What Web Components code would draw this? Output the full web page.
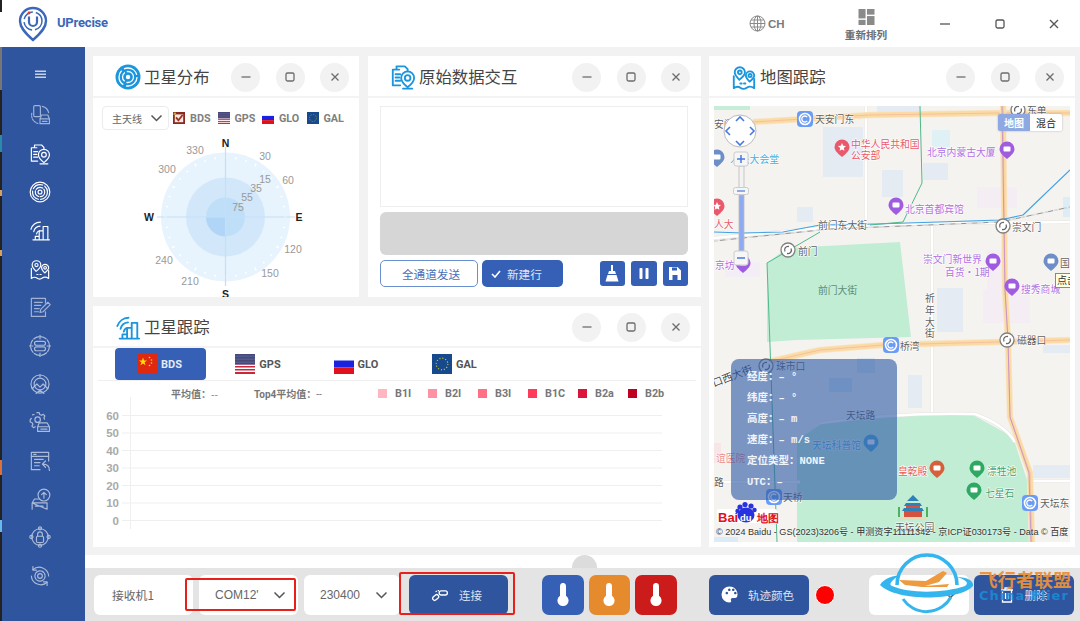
<!DOCTYPE html>
<html lang="zh">
<head>
<meta charset="utf-8">
<title>UPrecise</title>
<style>
  html, body { margin: 0; width: 1080px; height: 621px; overflow: hidden; background: #f2f2f2; }
  body { font-family: "Noto Sans CJK SC", "Liberation Sans", sans-serif; }
</style>
</head>
<body>
<app-shell></app-shell>

<script>
const CJK = `"Noto Sans CJK SC", sans-serif`;
const LATIN = `"Liberation Sans", "Noto Sans CJK SC", sans-serif`;

// line icons, all on a 28 unit box
const ICONS = {
  phonecar: `<rect x="6" y="2" width="8.5" height="14" rx="1.5"/><path d="M17 3a11 11 0 0 1 8 8"/><path d="M3.5 12a11 11 0 0 0 9 13" stroke-dasharray="2 1.6"/><path d="M14 25v-6l2-5h8l2 5v6zM14 19h12M17 22h6"/>`,
  docpin: `<path d="M7 6V2.5h9l3 3V8M10 6H3v17h8"/><path d="M6 11h5M6 14.5h4M6 18h5"/><path d="M19 25c-5-4-7-7-7-10a7 7 0 0 1 14 0c0 3-2 6-7 10z"/><circle cx="19" cy="15" r="3"/><path d="M14 26.5h10"/>`,
  radar: `<circle cx="14" cy="14" r="12.5"/><circle cx="14" cy="14" r="9.5" stroke-dasharray="14 3"/><circle cx="14" cy="14" r="6" stroke-dasharray="9 2"/><circle cx="14" cy="14" r="2.5"/>`,
  signal: `<path d="M2.5 13a13 13 0 0 1 12-9M6 16a9 9 0 0 1 8-7M9.5 19a5 5 0 0 1 4-4"/><path d="M8 26v-4h5v4M13 26V15h5v11M18 26V9.5h6V26M5 26.5h21"/>`,
  mappins: `<path d="M9 17c-3-3-5-5-5-8a5.5 5.5 0 0 1 11 0c0 3-2 5-6 8z"/><circle cx="9.5" cy="9" r="2"/><path d="M20 19c-3-3-4-4-4-6.5a4.5 4.5 0 0 1 9 0c0 2.5-1 3.5-5 6.5z"/><circle cx="20.5" cy="12.5" r="1.7"/><path d="M3 13v13c3-2 5-2 7-.5s5 1.5 7 0 5-1.5 8 .5V16"/><path d="M10 21h1.5M14 21h1.5"/>`,
  formedit: `<path d="M21 9V3H3v23h18v-6"/><path d="M7 8h10M7 12h8M7 16h6M7 20h5"/><path d="M14 21l1-4 9-9 3 3-9 9z"/>`,
  target: `<circle cx="14" cy="14" r="12" stroke-dasharray="7.5 2"/><path d="M14 0v5M14 23v5M0 14h5M23 14h5"/><rect x="7" y="8" width="14" height="5" rx="2.5"/><rect x="7" y="15" width="14" height="5" rx="2.5"/>`,
  dome: `<circle cx="14" cy="14" r="11.5"/><circle cx="14" cy="14" r="7.5"/><path d="M4 20l6-6 4 4 4-4 6 6M14 2v3M9 26l5-4 5 4"/>`,
  gearbox: `<path d="M10 2h3l.7 2.5 2.3 1 2.2-1.3 2 2-1.2 2.3.8 2"/><path d="M4.500 5 6.500 4.500M3 9.500 1.500 11v3L4 15l1 2-1.300 2.200 2 2 2.200-1.200"/><circle cx="11" cy="11" r="3.5"/><path d="M11 26v-6l2-5h10l3 5v6zM11 20h15M15 23h8"/>`,
  winreply: `<path d="M25 14V3H3v22h11"/><path d="M3 8h22M6 5.5h3"/><path d="M7 12h11M7 16h7M7 20h6"/><path d="M26 26c0-5-3-8-8-8M21 14l-4 4 4 4"/>`,
  boxup: `<circle cx="19" cy="9" r="7.5"/><path d="M19 13V6M16 8.5 19 5.5 22 8.5"/><path d="M4 27v-8l3-5h6M4 19h19v8zM8 23h10"/>`,
  lock: `<circle cx="14" cy="14" r="10.5"/><circle cx="14" cy="3" r="2"/><circle cx="14" cy="25" r="2"/><circle cx="3" cy="14" r="2"/><circle cx="25" cy="14" r="2"/><rect x="9.5" y="13" width="9" height="8" rx="1.5"/><path d="M11 13v-2.5a3 3 0 0 1 6 0V13"/>`,
  gearsync: `<path d="M5 6a12 12 0 0 1 20 8M23 22a12 12 0 0 1-20-8"/><path d="M5 2v4.500h4.500M23 26v-4.500h-4.500"/><circle cx="14" cy="14" r="6.5" stroke-dasharray="3 1"/><circle cx="14" cy="14" r="3"/>`
};

function lineIcon(name, size, color, weight) {
  return `<svg width="${size}" height="${size}" viewBox="0 0 28 28" fill="none" stroke="${color}" stroke-width="${weight || 1.6}" stroke-linecap="round" stroke-linejoin="round">${ICONS[name]}</svg>`;
}

function flag(kind, size, radius) {
  const art = {
    cn: `<rect width="20" height="20" fill="#de2910"/><polygon points="6,3.5 7,6.5 10,6.5 7.6,8.3 8.5,11.2 6,9.4 3.5,11.2 4.4,8.3 2,6.5 5,6.5" fill="#ffde00"/><g fill="#ffde00"><circle cx="12.5" cy="3.5" r=".8"/><circle cx="14.5" cy="6" r=".8"/><circle cx="14.5" cy="9" r=".8"/><circle cx="12.5" cy="11.5" r=".8"/></g>`,
    cncheck: `<rect width="20" height="20" fill="#8a2a1e"/><rect x="3" y="4" width="14" height="13" fill="#f3e8e3"/><path d="M5 9l4 5 7-9" fill="none" stroke="#a3301f" stroke-width="3"/><rect x="1" y="1" width="4" height="4" fill="#c2a23a"/>`,
    us: `<rect width="20" height="20" fill="#fff"/><g fill="#c8283e"><rect y="0" width="20" height="1.5"/><rect y="3" width="20" height="1.5"/><rect y="6" width="20" height="1.5"/><rect y="9" width="20" height="1.5"/><rect y="12" width="20" height="1.5"/><rect y="15" width="20" height="1.5"/><rect y="18" width="20" height="2"/></g><rect width="20" height="10.5" fill="#3c4a80" opacity=".9"/>`,
    ru: `<rect width="20" height="20" fill="#fff"/><rect y="6.5" width="20" height="7" fill="#1a22e0"/><rect y="13.5" width="20" height="6.5" fill="#e0101c"/>`,
    eu: `<rect width="20" height="20" fill="#164a8c"/><circle cx="10" cy="10" r="5.8" fill="none" stroke="#d8c83a" stroke-width="1.2" stroke-dasharray="1 2"/>`
  }[kind];
  return `<svg width="${size}" height="${size}" viewBox="0 0 20 20" style="display:block;flex:none;border-radius:${radius || 0}px">${art}</svg>`;
}

class AppShell extends HTMLElement {
  constructor() {
    super();
    this.attachShadow({ mode: "open" }).innerHTML = `
      <style>
        :host { display: flex; width: 1080px; height: 621px; overflow: hidden; }
        .edge { width: 2px; flex: none; background: linear-gradient(#222 0 12px, #fff 12px 47px, #777 47px 90px, #222 90px 135px, #2b8aa8 135px 152px, #222 152px 190px, #d9a05a 190px 196px, #222 196px 250px, #d9a05a 250px 256px, #222 256px 460px, #d9733a 460px 475px, #222 475px 520px, #6bb8ea 520px 532px, #222 532px); }
        .col { flex: 1; display: flex; flex-direction: column; min-width: 0; }
        .row { flex: 1; display: flex; min-height: 0; }
        .main { flex: 1; display: flex; flex-direction: column; min-width: 0; }
        .work { height: 508px; box-sizing: border-box; padding: 9px 5px 8px 8px; background: #f2f2f2; display: flex; gap: 8px; }
        .left { width: 608px; display: flex; flex-direction: column; gap: 9px; }
        .top { display: flex; gap: 9px; }
        sat-panel.a { width: 266px; height: 241px; --head-right: 10px; }
        sat-panel.b { width: 333px; height: 241px; }
        sat-panel.c { height: 241px; }
        sat-panel.d { width: 366px; height: 491px; }
        .gap { height: 13px; background: #fff; position: relative; }
        .handle { position: absolute; left: 487px; top: 0; width: 25px; height: 13px; background: #dcdcdc; border-radius: 13px 13px 0 0; }
      </style>
      <div class="edge"></div>
      <div class="col">
        <top-bar></top-bar>
        <div class="row">
          <side-nav></side-nav>
          <div class="main">
            <div class="work">
              <div class="left">
                <div class="top">
                  <sat-panel class="a" heading="卫星分布" icon="radar"><sky-plot></sky-plot></sat-panel>
                  <sat-panel class="b" heading="原始数据交互" icon="docpin"><raw-data></raw-data></sat-panel>
                </div>
                <sat-panel class="c" heading="卫星跟踪" icon="signal"><track-chart></track-chart></sat-panel>
              </div>
              <sat-panel class="d" heading="地图跟踪" icon="mappins"><map-view></map-view></sat-panel>
            </div>
            <div class="gap"><div class="handle"></div></div>
            <bottom-bar></bottom-bar>
          </div>
        </div>
      </div>
    `;
  }
}

class TopBar extends HTMLElement {
  constructor() {
    super();
    this.attachShadow({ mode: "open" }).innerHTML = `
      <style>
        :host { display: flex; align-items: center; height: 47px; background: #fff; flex: none; position: relative; font-family: ${CJK}; }
        .logo { margin-left: 16px; display: block; flex: none; }
        .name { margin-left: 9px; margin-top: -2px; font: 700 13px Roboto, ${LATIN}; color: #3b68b8; letter-spacing: -.2px; }
        .space { flex: 1; }
        .lang { display: flex; align-items: center; gap: 2px; width: 38px; font: 700 11.5px ${LATIN}; color: #7a7a7a; }
        .sort { width: 44px; margin-left: 57px; display: flex; flex-direction: column; align-items: center; gap: 4px; font-size: 10.6px; font-weight: 700; color: #6e6e6e; line-height: 12px; white-space: nowrap; padding-top: 2px; }
        .ctl { width: 20px; display: flex; justify-content: center; }
        .c1 { margin-left: 47px; } .c2 { margin-left: 35px; } .c3 { margin-left: 34px; margin-right: 16px; }
      </style>
      <svg class="logo" width="30" height="36" viewBox="0 0 30 36" fill="none">
        <path d="M15 34C6 26 2 21 2 15a13 13 0 0 1 26 0c0 6-4 11-13 19z" stroke="#3b68b8" stroke-width="2.4"/>
        <circle cx="15" cy="15" r="9" stroke="#3b68b8" stroke-width="1.5" stroke-dasharray="12 3"/>
        <path d="M11 10.5v5.5a4 4 0 0 0 8 0v-5.5" stroke="#3b68b8" stroke-width="2.2"/>
        <circle cx="11" cy="7" r="1.4" fill="#e8382c"/>
      </svg>
      <div class="name">UPrecise</div>
      <div class="space"></div>
      <div class="lang">
        <svg width="17" height="17" viewBox="0 0 17 17" fill="none" stroke="#8a8a8a" stroke-width="1"><circle cx="8.5" cy="8.5" r="7.5"/><ellipse cx="8.5" cy="8.5" rx="3.5" ry="7.5"/><path d="M1 8.5h15M2 5h13M2 12h13M8.5 1v15"/></svg>
        <span>CH</span>
      </div>
      <div class="sort">
        <svg width="17" height="16" viewBox="0 0 17 17" fill="#8a8a8a" style="display:block"><rect width="7.5" height="10"/><rect x="9" width="8" height="6"/><rect y="11.5" width="7.5" height="5.5"/><rect x="9" y="7.5" width="8" height="9.5"/></svg>
        <span>重新排列</span>
      </div>
      <div class="ctl c1"><svg width="12" height="12" viewBox="0 0 12 12"><path d="M1 6h10" stroke="#555" stroke-width="1.3"/></svg></div>
      <div class="ctl c2"><svg width="12" height="12" viewBox="0 0 12 12"><rect x="2" y="2" width="8" height="8" rx="1.5" fill="none" stroke="#555" stroke-width="1.3"/></svg></div>
      <div class="ctl c3"><svg width="12" height="12" viewBox="0 0 12 12"><path d="M2 2l8 8M10 2l-8 8" stroke="#555" stroke-width="1.3"/></svg></div>
    `;
  }
}

class SideNav extends HTMLElement {
  constructor() {
    super();
    const items = [
      ["phonecar", .55], ["docpin", 1], ["radar", 1], ["signal", 1], ["mappins", 1], ["formedit", .55],
      ["target", .6], ["dome", .6], ["gearbox", .6], ["winreply", .6], ["boxup", .6], ["lock", .6], ["gearsync", .6]
    ];
    const rows = items.map(([name, alpha]) => `<div class="it" style="opacity:${alpha}">${lineIcon(name, 22, "#fff", 1.5)}</div>`).join("");
    this.attachShadow({ mode: "open" }).innerHTML = `
      <style>
        :host { display: block; width: 83px; flex: none; background: #2f559f; }
        .menu { height: 18px; margin-top: 18px; margin-bottom: 13px; display: flex; justify-content: center; align-items: center; padding-right: 7px; }
        .it { height: 38.4px; display: flex; justify-content: center; align-items: center; padding-right: 7px; }
      </style>
      <div class="menu"><svg width="11" height="9" viewBox="0 0 11 9" fill="#c5d1e8"><rect y=".5" width="11" height="1.5"/><rect y="3.5" width="11" height="1.5"/><rect y="6.5" width="11" height="1.5"/></svg></div>
      ${rows}
    `;
  }
}

class SatPanel extends HTMLElement {
  constructor() {
    super();
    const btn = glyph => `<span class="btn"><svg width="12" height="12" viewBox="0 0 12 12" fill="none" stroke="#6c6c6c" stroke-width="1.3">${glyph}</svg></span>`;
    this.attachShadow({ mode: "open" }).innerHTML = `
      <style>
        :host { display: flex; flex-direction: column; background: #fff; overflow: hidden; font-family: ${CJK}; }
        header { height: 40px; flex: none; box-sizing: border-box; display: flex; align-items: center; padding: 2px var(--head-right, 11px) 0 22px; }
        .title { margin: -2px 0 0 3px; font-size: 16.4px; color: #444; flex: 1; white-space: nowrap; }
        .btn { width: 29px; height: 29px; border-radius: 50%; background: #f2f2f2; display: flex; align-items: center; justify-content: center; margin-left: 15.5px; }
        .rule { height: 2px; background: #f3f3f3; flex: none; }
        .body { flex: 1; min-height: 0; position: relative; }
        svg { display: block; flex: none; }
        .ic { width: 26px; height: 26px; display: flex; align-items: center; }
      </style>
      <header>
        <span class="ic">${this.headIcon()}</span>
        <span class="title"></span>
        ${btn(`<path d="M1.5 6h9"/>`)}
        ${btn(`<rect x="2" y="2" width="8" height="8" rx="1.5"/>`)}
        ${btn(`<path d="M2.5 2.5l7 7M9.5 2.5l-7 7"/>`)}
      </header>
      <div class="rule"></div>
      <div class="body"><slot></slot></div>
    `;
    this.shadowRoot.querySelector(".title").textContent = this.getAttribute("heading");
  }
  headIcon() {
    const name = this.getAttribute("icon");
    if (name === "radar") {
      return `<svg width="26" height="26" viewBox="0 0 26 26" fill="none"><circle cx="13" cy="13" r="12.5" fill="#1b96dd"/><circle cx="13" cy="13" r="9" stroke="#fff" stroke-width="1.3" stroke-dasharray="16 3"/><circle cx="13" cy="13" r="5.5" stroke="#fff" stroke-width="1.3" stroke-dasharray="10 2"/><circle cx="13" cy="13" r="2.2" fill="#fff"/></svg>`;
    }
    return lineIcon(name, 26, "#1b96dd", 2);
  }
}

class PlainSelect extends HTMLElement {
  constructor() {
    super();
    this.attachShadow({ mode: "open" }).innerHTML = `
      <style>
        :host { display: flex; align-items: center; box-sizing: border-box; background: #fff; border-radius: 6px; color: #666; font-family: ${CJK}; }
        svg { display: block; flex: none; margin-left: auto; }
      </style>
      <slot></slot>
      <svg width="13" height="8" viewBox="0 0 13 8" fill="none" stroke="#555" stroke-width="1.5"><path d="M1.5 1.5l5 5 5-5"/></svg>
    `;
  }
}

class SkyPlot extends HTMLElement {
  constructor() {
    super();
    const degs = [["330",195,150],["30",265,156],["300",167,169],["60",288,180],["15",265,179],["35",256,188],["55",247,197],["75",238,207],["120",293,249],["150",270,273],["240",164,260],["210",190,281]];
    const labels = degs.map(([t, x, y]) => `<text x="${x}" y="${y + 3.5}" text-anchor="middle" font-size="10.5" fill="#999">${t}</text>`).join("");
    let ticks = "";
    for (let a = 0; a < 360; a += 10) {
      const r = a * Math.PI / 180;
      const len = a % 30 === 0 ? 3 : 2;
      ticks += `<line x1="${225.5 + Math.cos(r) * 58.5}" y1="${217 + Math.sin(r) * 58.5}" x2="${225.5 + Math.cos(r) * (58.5 + len)}" y2="${217 + Math.sin(r) * (58.5 + len)}" stroke="#fff" stroke-width="1.5"/>`;
    }
    const legend = [["cncheck", "BDS"], ["us", "GPS"], ["ru", "GLO"], ["eu", "GAL"]]
      .map(([f, t]) => `<span class="sys">${flag(f, 12)}<b>${t}</b></span>`).join("");
    this.attachShadow({ mode: "open" }).innerHTML = `
      <style>
        :host { display: block; font-family: ${LATIN}; }
        .bar { display: flex; align-items: center; padding: 8px 0 0 9px; height: 24px; }
        plain-select { width: 67px; height: 24px; border: 1px solid #ececec; border-radius: 4px; padding: 0 5px 0 9px; font-size: 10px; flex: none; }
        .sys { display: flex; align-items: center; gap: 5px; margin-right: 5.5px; }
        .sys:first-of-type { margin-left: 4px; }
        b { font: 700 10.8px Roboto, ${LATIN}; color: #808080; width: 22px; }
        svg.plot { display: block; }
      </style>
      <div class="bar"><plain-select>主天线</plain-select>${legend}</div>
      <svg class="plot" width="266" height="167" viewBox="93 130 266 167" font-family='"Liberation Sans", sans-serif'>
        <circle cx="225.5" cy="217" r="64.5" fill="#e7f3fd"/>
        ${ticks}
        <circle cx="225.5" cy="217" r="39.5" fill="#d2e8fa"/>
        <circle cx="225.5" cy="217" r="19.5" fill="#bfdef8"/>
        <path d="M225.5 217h-19.5a19.5 19.5 0 0 0 19.5 19.5z" fill="#b1d5f6"/>
        <path d="M225.5 147v139M157 217h138" stroke="#c4dffa" stroke-width="1.2"/>
        ${labels}
        <g font-size="10.5" font-weight="700" fill="#222" text-anchor="middle">
          <text x="225.5" y="147">N</text><text x="225.5" y="298">S</text><text x="149" y="221">W</text><text x="299" y="221">E</text>
        </g>
      </svg>
    `;
  }
}

class RawData extends HTMLElement {
  constructor() {
    super();
    const tool = art => `<span class="tool"><svg width="16" height="17" viewBox="0 0 16 17" fill="#fff">${art}</svg></span>`;
    this.attachShadow({ mode: "open" }).innerHTML = `
      <style>
        :host { display: flex; flex-direction: column; padding: 8px 13px 0 12px; font-family: ${CJK}; }
        .log { height: 101px; box-sizing: border-box; border: 1px solid #eee; }
        .input { height: 43px; margin-top: 5px; background: #d6d6d6; border-radius: 6px; }
        .acts { display: flex; align-items: center; margin-top: 5px; height: 27px; }
        .b { height: 27px; box-sizing: border-box; border-radius: 5px; font-size: 11.6px; display: flex; align-items: center; justify-content: center; white-space: nowrap; }
        .all { width: 98px; border: 1px solid #6a8fd0; color: #4a70b8; padding-left: 4px; }
        .new { width: 81px; margin-left: 4px; background: #3560b5; color: #dfe7f5; gap: 6px; justify-content: flex-start; padding-left: 9px; }
        .tools { margin-left: auto; display: flex; gap: 6px; }
        .tool { width: 25.5px; height: 25px; border-radius: 3px; background: #3560b5; display: flex; align-items: center; justify-content: center; }
        svg { display: block; }
      </style>
      <div class="log"></div>
      <div class="input"></div>
      <div class="acts">
        <div class="b all">全通道发送</div>
        <div class="b new"><svg width="10" height="8" viewBox="0 0 10 8" fill="none" stroke="#fff" stroke-width="1.6"><path d="M1 4l3 3 5-6"/></svg>新建行</div>
        <div class="tools">
          ${tool(`<path d="M7 0h2v6h2l1 3H4l1-3h2z"/><path d="M3.5 10h9l2 6.5H1.5z"/>`)}
          ${tool(`<rect x="3.5" y="3" width="3" height="11" rx=".8"/><rect x="9.5" y="3" width="3" height="11" rx=".8"/>`)}
          ${tool(`<path fill-rule="evenodd" d="M2 2h8.5L14 5.5V15H2zM5 2.5v3h5v-3zM5.5 10v5h5v-5z"/>`)}
        </div>
      </div>
    `;
  }
}

class TrackChart extends HTMLElement {
  constructor() {
    super();
    const tabs = [["cn", "BDS"], ["us", "GPS"], ["ru", "GLO"], ["eu", "GAL"]]
      .map(([f, t], i) => `<div class="tab${i ? "" : " on"}">${flag(f, 20, 3)}<b>${t}</b></div>`).join("");
    const bands = [["B1I", "#ffb6c1"], ["B2I", "#ff91a4"], ["B3I", "#ff7085"], ["B1C", "#ff3b5c"], ["B2a", "#dc143c"], ["B2b", "#c00020"]]
      .map(([t, c]) => `<span class="band"><i style="background:${c}"></i>${t}</span>`).join("");
    const ys = [0, 10, 20, 30, 40, 50, 60];
    const grid = ys.map(v => {
      const y = 520.5 - v * 1.75;
      return `<line x1="122" x2="662" y1="${y}" y2="${y}" stroke="#efefef"/><text x="119" y="${y + 4}" text-anchor="end" font-size="11.5" font-weight="700" fill="#aaa">${v}</text>`;
    }).join("");
    this.attachShadow({ mode: "open" }).innerHTML = `
      <style>
        :host { display: block; font-family: ${CJK}; }
        .tabs { display: flex; height: 32px; margin: 0 5px 0 5px; padding-left: 17px; border-bottom: 1px solid #efefef; gap: 7.3px; }
        .tab { width: 91px; height: 32px; box-sizing: border-box; padding-left: 22px; display: flex; align-items: center; gap: 4px; border-radius: 4px; }
        .tab b { font: 700 11px Roboto, ${LATIN}; color: #555; }
        .on { background: #3560b5; }
        .on b { color: #e4eaf6; }
        .stats { height: 24px; position: relative; display: flex; align-items: center; font-size: 10px; color: #777; font-weight: 700; }
        .avg { margin-left: 78px; width: 83px; white-space: nowrap; }
        .avg4 { width: 124px; white-space: nowrap; font-family: Roboto, ${CJK}; }
        .band { width: 50px; display: flex; align-items: center; gap: 8px; font: 700 10.8px Roboto, ${LATIN}; color: #777; white-space: nowrap; }
        i { width: 9px; height: 9px; flex: none; display: block; }
        span.num { font-weight: 400; }
        svg { display: block; overflow: visible; }
      </style>
      <div class="tabs">${tabs}</div>
      <div class="stats"><span class="avg">平均值：<span class="num">--</span></span><span class="avg4">Top4平均值：<span class="num">--</span></span>${bands}</div>
      <svg width="608" height="142" viewBox="93 405 608 142" font-family='"Liberation Sans", sans-serif'>
        <line x1="130.5" x2="130.5" y1="397" y2="529" stroke="#efefef"/>
        ${grid}
      </svg>
    `;
  }
}

// map canvas pieces, coordinates are page pixels through the svg viewBox
function mapPin(x, y, color, art) {
  return `<g transform="translate(${x} ${y})"><path d="M0 10C-5 6-7.5 3-7.5 0a7.5 7.5 0 0 1 15 0c0 3-2.5 6-7.5 10z" fill="${color}"/>${art || `<rect x="-3.5" y="-2.5" width="7" height="5" rx="1" fill="#fff"/>`}</g>`;
}
function metro(x, y) {
  return `<g transform="translate(${x} ${y})"><rect x="-8" y="-8" width="16" height="16" rx="4" fill="#6b9cf5"/><circle r="5.5" fill="none" stroke="#fff" stroke-width="1.6"/><path d="M2.2-1.8A3 3 0 1 0 2.2 1.8" fill="none" stroke="#fff" stroke-width="1.3"/></g>`;
}
function ring(x, y) {
  return `<g transform="translate(${x} ${y})"><circle r="7" fill="#fff" stroke="#808080" stroke-width="1.3"/><path d="M-3 1.5A3.5 3.5 0 0 1 1-3.5M3 -1.5A3.5 3.5 0 0 1 -1 3.5" fill="none" stroke="#666" stroke-width="1.3"/></g>`;
}

class MapView extends HTMLElement {
  constructor() {
    super();
    const blocks = [
      [823,127,40,50,"#e4ebf3"],[932,130,18,17,"#e0f1f5"],[923,163,25,17,"#e4ebf3"],[882,170,21,27,"#e4ebf3"],[797,207,16,15,"#e4ebf3"],
      [977,187,40,21,"#f4edf3"],[1063,197,7,20,"#dcedf6"],[937,288,26,44,"#e4ebf3"],[908,375,14,33,"#e4ebf3"],[983,290,47,33,"#f4edf3"],
      [1043,345,27,8,"#e4ebf3"],[1033,465,37,13,"#e4ebf3"],[857,358,18,15,"#dde7f2"],[829,378,23,14,"#d7e6f2"],[877,106,43,7,"#e4ebf3"],
      [987,250,15,50,"#f4edf3"],[725,262,35,15,"#f3edf6"],[714,443,7,20,"#f8e6e6"],[714,106,36,4,"#c5edd8"],[714,537,24,5,"#dcebf6"],[995,537,26,5,"#dcebf6"]
    ].map(([x, y, w, h, c]) => `<rect x="${x}" y="${y}" width="${w}" height="${h}" fill="${c}"/>`).join("");

    const road = (d, w, c) => `<path d="${d}" fill="none" stroke="${c}" stroke-width="${w}" stroke-linejoin="round"/>`;
    const orange = d => road(d, 6.5, "#f8e6c8") + road(d, 5, "#fbdba4") + road(d, .7, "#f3b49a");
    const white = d => road(d, 3.5, "#e6e4e0") + road(d, 2.5, "#fff");

    const text = (t, x, y, c, o) => `<text x="${x}" y="${y + 3.5}" fill="${c}"${o || ""}>${t}</text>`;
    const GREY = "#5f5f5f", PURPLE = "#b070e2", RED = "#e85a6a", CYAN = "#44aedc";
    const STAR = `<polygon points="0,-4 1.2,-1.2 4,-1 1.8,1 2.4,3.8 0,2.4 -2.4,3.8 -1.8,1 -4,-1 -1.2,-1.2" fill="#fff"/>`;

    this.attachShadow({ mode: "open" }).innerHTML = `
      <style>
        :host { display: block; position: relative; width: 356px; height: 436px; margin: 8px 0 0 5px; overflow: hidden; font-family: ${CJK}; background: #f5f3f0; }
        svg { display: block; }
        svg text { font-size: 9.8px; paint-order: stroke; stroke: #fff; stroke-width: 1.2px; stroke-linejoin: round; }
        .toggle { position: absolute; left: 284px; top: 8px; width: 64px; height: 17px; display: flex; font-size: 10px; line-height: 17px; text-align: center; box-shadow: 0 0 2px #aaa; border-radius: 2px; overflow: hidden; }
        .toggle span { flex: 1; }
        .toggle .on { background: #8ea9e2; color: #fff; font-weight: 700; }
        .toggle .off { background: #fff; color: #222; }
        .tip { position: absolute; left: 341px; top: 167px; width: 20px; height: 13px; background: #ffffe1; border: 1px solid #888; font-size: 10px; line-height: 12px; color: #333; white-space: nowrap; padding-left: 1px; }
        .info { position: absolute; left: 17px; top: 253px; width: 166px; height: 141px; box-sizing: border-box; border-radius: 8px; background: rgba(47, 90, 165, .62); padding: 8px 0 0 16px; color: #f0f4fb; font: 700 10.5px/20.9px "Liberation Mono", ${CJK}; white-space: nowrap; }
        .copy { position: absolute; left: 2px; top: 420px; right: 0; font: 9.1px/13px ${LATIN}; color: #333; white-space: nowrap; text-shadow: 0 0 2px #fff; }
      </style>
      <svg width="356" height="436" viewBox="714 106 356 436">
        <rect x="714" y="106" width="356" height="436" fill="#f5f3f0"/>
        ${blocks}
        <path d="M767 263L787 248 900 242 911 337 797 340 767 342Z" fill="#c1edd5"/>
        <path d="M797 440L823 423 897 415 973 415 1013 437 1027 480 1029 542 797 542Z" fill="#c1edd5"/>
        ${white("M866 106V222")}
        ${white("M932 222V412")}
        ${white("M714 238L820 228 900 224 1070 222")}
        ${white("M820 423Q900 412 975 414 1005 425 1015 442")}
        ${white("M1030 481H1070")}
        ${white("M714 482H800")}
        ${orange("M753 122L870 115 1000 113H1070")}
        ${orange("M1003 106L1005 290 1008 340 1010 417 1030 473 1032 542")}
        ${orange("M763 363L820 350 883 345 1070 340")}
        ${road("M714 241L830 229 1000 222 1070 207", 1, "#8f8f8f")}
        ${road("M714 241L830 229 1000 222 1070 207", .8, "#fff").replace("<path ", '<path stroke-dasharray="6 5" ')}
        ${road("M714 232L743 233 783 232 820 225 877 224 1000 220 1023 215 1070 170", 1.1, "#3ea3e6")}
        ${road("M920 106L922 183 903 222 870 225", 1, "#4fb98a")}
        ${road("M820 232L767 263 768 290 777 542", 1, "#4fb98a")}
        ${road("M1002 106L1005 290 1008 340 1010 417 1029 473 1031 542", .7, "#b480d8")}

        <g>
          ${metro(805, 119)}${text("天安门东", 815, 119, GREY)}
          ${ring(1018, 110)}${text("东单", 1027, 110, GREY)}
          ${text("安门", 714, 124, GREY)}
          ${mapPin(842, 147, "#e9596b", STAR)}
          ${text("中华人民共和国", 851, 144, RED)}${text("公安部", 851, 155, RED)}
          ${text("北京内蒙古大厦", 927, 152, PURPLE)}${mapPin(1007, 149, "#a05ce0")}
          ${mapPin(717, 157, "#6d8ec6")}${text("人民大会堂", 730, 159, CYAN)}
          ${text("北京首都宾馆", 905, 209, PURPLE)}${mapPin(896, 205, "#a05ce0")}
          ${mapPin(717, 206, "#e9596b", STAR)}
          ${text("人大", 714, 224, RED)}
          ${text("前门东大街", 818, 225, GREY)}
          ${ring(1003, 226)}${text("崇文门", 1012, 227, GREY)}
          ${ring(788, 250)}${text("前门", 798, 251, GREY)}
          ${text("京坊", 715, 265, PURPLE)}${mapPin(743, 263, "#a05ce0")}
          ${text("崇文门新世界", 923, 259, PURPLE)}${text("百货·1期", 945, 272, PURPLE)}${mapPin(993, 261, "#a05ce0")}
          ${mapPin(1051, 261, "#6d8ec6")}${text("国", 1060, 263, GREY)}
          ${mapPin(1012, 286, "#a05ce0")}${text("搜秀商城", 1021, 289, PURPLE)}
          ${text("前门大街", 818, 290, "#5f8e78", ' style="stroke:none"')}
          ${text("祈", 925, 298, GREY)}${text("年", 925, 310, GREY)}${text("大", 925, 322, GREY)}${text("街", 925, 333, GREY)}
          ${metro(891, 345)}${text("桥湾", 900, 346, GREY)}
          ${ring(1007, 340)}${text("磁器口", 1017, 340, GREY)}
          ${ring(766, 366)}${text("珠市口", 776, 366, GREY)}
          <text transform="translate(714 387) rotate(-21)" fill="#444" style="font-size:10.5px">口西大街</text>
          ${text("天坛路", 846, 415, GREY)}
          ${text("天坛科普馆", 812, 445, CYAN)}${mapPin(871, 442, "#4aa8d8")}
          ${text("谊医院", 716, 458, "#eb8a8a")}
          ${text("皇乾殿", 898, 471, "#e85a50")}${mapPin(937, 468, "#d6603c")}
          ${text("漂牲池", 987, 471, "#3a9f6a")}${mapPin(977, 468, "#2fa862")}
          ${text("七星石", 985, 493, "#3a9f6a")}${mapPin(974, 490, "#2fa862")}
          ${metro(1030, 503)}${text("天坛东", 1040, 503, GREY)}
          ${metro(774, 497)}${text("天桥", 783, 497, GREY)}
          ${text("路", 714, 482, GREY)}
          <g transform="translate(913 507)">
            <rect x="-14" y="10" width="28" height="3" fill="#e8d9b8"/>
            <path d="M-11 4H11L9 1H-9ZM-9 -1H9L7 -4H-7ZM-6 -6H6L0 -12Z" fill="#2f7fb8"/>
            <rect x="-9" y="4" width="18" height="6" fill="#d4523e"/><rect x="-7" y="-1" width="14" height="2" fill="#d4523e"/>
            <path d="M-14 10V0M14 10V0" stroke="#4fb060" stroke-width="2"/>
          </g>
          ${text("天坛公园", 895, 527, GREY)}
        </g>

        <!-- baidu mark -->
        <g font-family='"Liberation Sans", sans-serif' font-weight="700">
          <rect x="717" y="509" width="60" height="14" rx="2" fill="#fff"/>
          <text x="718" y="521.5" style="font-size:13px;stroke:#fff" fill="#e1101c">Bai</text>
          <g fill="#2932e1"><ellipse cx="746" cy="515" rx="8.5" ry="7.5"/><circle cx="740" cy="507" r="2.6"/><circle cx="745" cy="504.5" r="2.6"/><circle cx="751" cy="506" r="2.6"/><circle cx="737.5" cy="511" r="2.2"/><circle cx="754.5" cy="510" r="2.2"/></g>
          <text x="740" y="520.5" style="font-size:9.5px;stroke:none" fill="#fff">du</text>
          <text x="756.5" y="522" style="font-size:10.5px;stroke:#fff;font-family:${CJK}" fill="#e1101c">地图</text>
        </g>

        <!-- pan and zoom control -->
        <g>
          <circle cx="740" cy="131" r="16" fill="#fff" stroke="#bbb" stroke-width="1"/>
          <path d="M736 121l4-4 4 4M736 141l4 4 4-4M730 127l-4 4 4 4M750 127l4 4-4 4" fill="none" stroke="#4a78e0" stroke-width="1.6"/>
          <rect x="739" y="166" width="5" height="25" fill="#f2f2f2" stroke="#bbb" stroke-width=".8"/>
          <rect x="739" y="195" width="5" height="58" fill="#8eaaf0" stroke="#bbb" stroke-width=".8"/>
          <rect x="734" y="152" width="14" height="14" rx="2" fill="#f6f6f6" stroke="#ccc"/>
          <path d="M737 159h8M741 155v8" stroke="#4a78e0" stroke-width="1.5"/>
          <rect x="733.5" y="187.5" width="15" height="7" rx="2" fill="#f6f6f6" stroke="#ccc"/>
          <path d="M737 191h8" stroke="#4a78e0" stroke-width="1.2"/>
          <rect x="734" y="251" width="14" height="14" rx="2" fill="#f6f6f6" stroke="#ccc"/>
          <path d="M737 258h8" stroke="#4a78e0" stroke-width="1.5"/>
        </g>
      </svg>
      <div class="toggle"><span class="on">地图</span><span class="off">混合</span></div>
      <div class="tip">点击</div>
      <div class="info">
        <div>经度：– °</div>
        <div>纬度：– °</div>
        <div>高度：– m</div>
        <div>速度：– m/s</div>
        <div>定位类型：NONE</div>
        <div>UTC：–</div>
      </div>
      <div class="copy">© 2024 Baidu - GS(2023)3206号 - 甲测资字11111342 - 京ICP证030173号 - Data © 百度</div>
    `;
  }
}

class BottomBar extends HTMLElement {
  constructor() {
    super();
    const thermo = `<svg width="12" height="23" viewBox="0 0 14 26" fill="#fff"><path fill-rule="evenodd" d="M3.5 3a3.5 3.5 0 0 1 7 0v11.5a6.500 6.500 0 1 1-7 0z"/></svg>`;
    this.attachShadow({ mode: "open" }).innerHTML = `
      <style>
        :host { display: flex; align-items: center; height: 53px; background: #e4e4e4; position: relative; padding-left: 9px; font-family: ${CJK}; font-size: 11.5px; color: #666; }
        .box { width: 99px; height: 40px; box-sizing: border-box; background: #fff; border-radius: 6px; display: flex; align-items: center; padding-left: 18px; font-size: 11.8px; margin-right: 6px; flex: none; }
        plain-select { width: 99px; height: 40px; padding: 0 12px 0 16px; font-size: 12px; margin-right: 6px; flex: none; font-family: ${LATIN}; }
        plain-select.rate { width: 96px; margin-right: 9px; }
        plain-select.blank { width: 100px; margin: 0 5px 0 0; }
        .btn { width: 99px; height: 40px; background: #2f559f; border-radius: 6px; color: #dbe3f2; display: flex; align-items: center; flex: none; box-sizing: border-box; }
        .link { gap: 10px; padding-left: 22px; margin-right: 34px; }
        .temp { width: 41.5px; height: 40px; border-radius: 7px; display: flex; align-items: center; justify-content: center; margin-right: 5px; flex: none; }
        .paint { width: 100px; gap: 10px; padding-left: 12px; margin-left: 32.5px; }
        .dot { width: 20px; height: 20px; box-sizing: border-box; border-radius: 50%; background: #f00; border: 1px solid #fff; margin: 0 34px 0 5.5px; flex: none; }
        .del { width: 100px; gap: 11px; padding-left: 26px; }
        .mark { position: absolute; left: 8px; top: 2px; border: 2px solid #e8201c; border-radius: 2px; box-sizing: content-box; pointer-events: none; }
        .mark.com { left: 100px; top: 10px; width: 107px; height: 29px; }
        .mark.con { left: 314px; top: 4px; width: 112px; height: 39px; }
        .water { position: absolute; left: 795px; top: -18px; }
        .wm { position: absolute; left: 894px; top: 3px; width: 96px; font-size: 18.5px; font-weight: 700; color: #e8903c; line-height: 17px; white-space: nowrap; opacity: .95; }
        .wm2 { position: absolute; left: 894px; top: 20px; font: 700 13px/16px "DejaVu Sans", sans-serif; color: #1a8ed8; letter-spacing: 1px; white-space: nowrap; opacity: .85; }
        svg { display: block; flex: none; }
      </style>
      <div class="box">接收机1</div>
      <plain-select>COM12'</plain-select>
      <plain-select class="rate">230400</plain-select>
      <div class="btn link">
        <svg width="18" height="16" viewBox="0 0 22 16" fill="none" stroke="#fff" stroke-width="1.6"><rect x="10" y="3" width="10" height="5" rx="2.5"/><rect x="1.5" y="9" width="8" height="5" rx="2.5" transform="rotate(-40 5 11)"/><path d="M9 2v2M6 3l1 2" stroke-dasharray="1.5 1"/></svg>
        连接
      </div>
      <div class="temp" style="background:#3560b5">${thermo}</div>
      <div class="temp" style="background:#e58b2e">${thermo}</div>
      <div class="temp" style="background:#cc1b1b;margin-right:0">${thermo}</div>
      <div class="btn paint">
        <svg width="17" height="17" viewBox="0 0 17 17"><path fill="#fff" fill-rule="evenodd" d="M8.5.5a8 8 0 0 0 0 16c1.5 0 2-1 1.5-2-.6-1.3.3-2.5 1.7-2.5h2.3c1.5 0 2.5-1 2.5-3.5 0-4.500-3.500-8-8-8zM4.500 7a1.300 1.300 0 1 1 0 .01zM7 3.800a1.300 1.300 0 1 1 0 .01zM11 3.800a1.300 1.300 0 1 1 0 .01zM13 7a1.300 1.300 0 1 1 0 .01z"/></svg>
        轨迹颜色
      </div>
      <div class="dot"></div>
      <plain-select class="blank"></plain-select>
      <div class="btn del">
        <svg width="14" height="16" viewBox="0 0 14 16" fill="none" stroke="#fff" stroke-width="1.3"><path d="M1 3h12M5 3V1h4v2M2.5 3v12h9V3M5.5 6v6M8.5 6v6"/></svg>
        删除
      </div>
      <div class="mark com"></div>
      <div class="mark con"></div>
      <svg class="water" width="96" height="66" viewBox="880 550 96 66">
        <path d="M897 585A30 30 0 0 1 957 585" fill="none" stroke="#35b5ee" stroke-width="3.5"/>
        <path d="M903 599A28 28 0 0 0 951 597" fill="none" stroke="#35b5ee" stroke-width="3"/>
        <path d="M880 585C884 578 893 576 900 575C892 580 888 584 892 586C910 594 945 593 965 586C970 583 965 579 956 577C968 577 974 581 973 586C960 601 897 602 880 585Z" fill="#35b5ee"/>
        <path d="M899 580L926 581 943 571 947 573 939 582 925 586 949 584 947 587 922 587 905 585Z" fill="#ee9a3e"/>
      </svg>
      <div class="wm">飞行者联盟</div>
      <div class="wm2">China Flier</div>
    `;
  }
}

customElements.define("plain-select", PlainSelect);
customElements.define("sat-panel", SatPanel);
customElements.define("sky-plot", SkyPlot);
customElements.define("raw-data", RawData);
customElements.define("track-chart", TrackChart);
customElements.define("map-view", MapView);
customElements.define("top-bar", TopBar);
customElements.define("side-nav", SideNav);
customElements.define("bottom-bar", BottomBar);
customElements.define("app-shell", AppShell);
</script>
</body>
</html>
